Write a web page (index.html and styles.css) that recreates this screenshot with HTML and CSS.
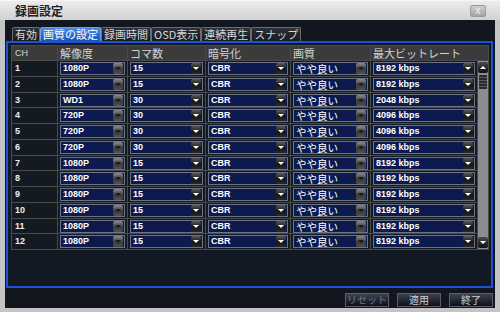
FILE: index.html
```html
<!DOCTYPE html>
<html lang="ja">
<head>
    <meta charset="UTF-8">
    <meta name="viewport" content="width=device-width, initial-scale=1.0">
    <title>録画設定</title>
    <link rel="stylesheet" href="styles.css">
</head>
<body>

<div class="window">
    <div class="titlebar">
        <span class="title">録画設定</span>
        <span class="close">x</span>
    </div>

    <div class="body">
        <div class="tabs">
            <div class="tab">有効</div>
            <div class="tab active">画質の設定</div>
            <div class="tab">録画時間</div>
            <div class="tab">OSD表示</div>
            <div class="tab">連続再生</div>
            <div class="tab">スナップ</div>
        </div>

        <div class="panel">
            <div class="grid">
                <div class="th ch">CH</div>
                <div class="th">解像度</div>
                <div class="th">コマ数</div>
                <div class="th">暗号化</div>
                <div class="th">画質</div>
                <div class="th last">最大ビットレート</div>

                <div class="scrollbar">
                    <div class="sb-btn up"></div>
                    <div class="sb-thumb"></div>
                    <div class="sb-track"></div>
                    <div class="sb-btn down"></div>
                </div>

                <!-- 1 -->
                <div class="td ch">1</div>
                <div class="td"><div class="sel"><span>1080P</span><i class="arrow dim"></i></div></div>
                <div class="td"><div class="sel"><span>15</span><i class="arrow"></i></div></div>
                <div class="td"><div class="sel"><span>CBR</span><i class="arrow"></i></div></div>
                <div class="td"><div class="sel jp"><span>やや良い</span><i class="arrow dim"></i></div></div>
                <div class="td"><div class="sel"><span>8192 kbps</span><i class="arrow"></i></div></div>
                <!-- 2 -->
                <div class="td ch">2</div>
                <div class="td"><div class="sel"><span>1080P</span><i class="arrow dim"></i></div></div>
                <div class="td"><div class="sel"><span>15</span><i class="arrow"></i></div></div>
                <div class="td"><div class="sel"><span>CBR</span><i class="arrow"></i></div></div>
                <div class="td"><div class="sel jp"><span>やや良い</span><i class="arrow dim"></i></div></div>
                <div class="td"><div class="sel"><span>8192 kbps</span><i class="arrow"></i></div></div>
                <!-- 3 -->
                <div class="td ch">3</div>
                <div class="td"><div class="sel"><span>WD1</span><i class="arrow dim"></i></div></div>
                <div class="td"><div class="sel"><span>30</span><i class="arrow"></i></div></div>
                <div class="td"><div class="sel"><span>CBR</span><i class="arrow"></i></div></div>
                <div class="td"><div class="sel jp"><span>やや良い</span><i class="arrow dim"></i></div></div>
                <div class="td"><div class="sel"><span>2048 kbps</span><i class="arrow"></i></div></div>
                <!-- 4 -->
                <div class="td ch">4</div>
                <div class="td"><div class="sel"><span>720P</span><i class="arrow dim"></i></div></div>
                <div class="td"><div class="sel"><span>30</span><i class="arrow"></i></div></div>
                <div class="td"><div class="sel"><span>CBR</span><i class="arrow"></i></div></div>
                <div class="td"><div class="sel jp"><span>やや良い</span><i class="arrow dim"></i></div></div>
                <div class="td"><div class="sel"><span>4096 kbps</span><i class="arrow"></i></div></div>
                <!-- 5 -->
                <div class="td ch">5</div>
                <div class="td"><div class="sel"><span>720P</span><i class="arrow dim"></i></div></div>
                <div class="td"><div class="sel"><span>30</span><i class="arrow"></i></div></div>
                <div class="td"><div class="sel"><span>CBR</span><i class="arrow"></i></div></div>
                <div class="td"><div class="sel jp"><span>やや良い</span><i class="arrow dim"></i></div></div>
                <div class="td"><div class="sel"><span>4096 kbps</span><i class="arrow"></i></div></div>
                <!-- 6 -->
                <div class="td ch">6</div>
                <div class="td"><div class="sel"><span>720P</span><i class="arrow dim"></i></div></div>
                <div class="td"><div class="sel"><span>30</span><i class="arrow"></i></div></div>
                <div class="td"><div class="sel"><span>CBR</span><i class="arrow"></i></div></div>
                <div class="td"><div class="sel jp"><span>やや良い</span><i class="arrow dim"></i></div></div>
                <div class="td"><div class="sel"><span>4096 kbps</span><i class="arrow"></i></div></div>
                <!-- 7 -->
                <div class="td ch">7</div>
                <div class="td"><div class="sel"><span>1080P</span><i class="arrow dim"></i></div></div>
                <div class="td"><div class="sel"><span>15</span><i class="arrow"></i></div></div>
                <div class="td"><div class="sel"><span>CBR</span><i class="arrow"></i></div></div>
                <div class="td"><div class="sel jp"><span>やや良い</span><i class="arrow dim"></i></div></div>
                <div class="td"><div class="sel"><span>8192 kbps</span><i class="arrow"></i></div></div>
                <!-- 8 -->
                <div class="td ch">8</div>
                <div class="td"><div class="sel"><span>1080P</span><i class="arrow dim"></i></div></div>
                <div class="td"><div class="sel"><span>15</span><i class="arrow"></i></div></div>
                <div class="td"><div class="sel"><span>CBR</span><i class="arrow"></i></div></div>
                <div class="td"><div class="sel jp"><span>やや良い</span><i class="arrow dim"></i></div></div>
                <div class="td"><div class="sel"><span>8192 kbps</span><i class="arrow"></i></div></div>
                <!-- 9 -->
                <div class="td ch">9</div>
                <div class="td"><div class="sel"><span>1080P</span><i class="arrow dim"></i></div></div>
                <div class="td"><div class="sel"><span>15</span><i class="arrow"></i></div></div>
                <div class="td"><div class="sel"><span>CBR</span><i class="arrow"></i></div></div>
                <div class="td"><div class="sel jp"><span>やや良い</span><i class="arrow dim"></i></div></div>
                <div class="td"><div class="sel"><span>8192 kbps</span><i class="arrow"></i></div></div>
                <!-- 10 -->
                <div class="td ch">10</div>
                <div class="td"><div class="sel"><span>1080P</span><i class="arrow dim"></i></div></div>
                <div class="td"><div class="sel"><span>15</span><i class="arrow"></i></div></div>
                <div class="td"><div class="sel"><span>CBR</span><i class="arrow"></i></div></div>
                <div class="td"><div class="sel jp"><span>やや良い</span><i class="arrow dim"></i></div></div>
                <div class="td"><div class="sel"><span>8192 kbps</span><i class="arrow"></i></div></div>
                <!-- 11 -->
                <div class="td ch">11</div>
                <div class="td"><div class="sel"><span>1080P</span><i class="arrow dim"></i></div></div>
                <div class="td"><div class="sel"><span>15</span><i class="arrow"></i></div></div>
                <div class="td"><div class="sel"><span>CBR</span><i class="arrow"></i></div></div>
                <div class="td"><div class="sel jp"><span>やや良い</span><i class="arrow dim"></i></div></div>
                <div class="td"><div class="sel"><span>8192 kbps</span><i class="arrow"></i></div></div>
                <!-- 12 -->
                <div class="td ch">12</div>
                <div class="td"><div class="sel"><span>1080P</span><i class="arrow dim"></i></div></div>
                <div class="td"><div class="sel"><span>15</span><i class="arrow"></i></div></div>
                <div class="td"><div class="sel"><span>CBR</span><i class="arrow"></i></div></div>
                <div class="td"><div class="sel jp"><span>やや良い</span><i class="arrow dim"></i></div></div>
                <div class="td"><div class="sel"><span>8192 kbps</span><i class="arrow"></i></div></div>
            </div>
        </div>

        <div class="buttons">
            <div class="btn disabled">リセット</div>
            <div class="btn">適用</div>
            <div class="btn">終了</div>
        </div>
    </div>
</div>

</body>
</html>
```

FILE: styles.css
```css
body {
    margin: 0;
    background-color: #c4c4c4;
    font-family: "Liberation Sans", "Noto Sans CJK JP", sans-serif;
}

.window {
    width: 500px;
    height: 312px;
    overflow: hidden;
}

/* title bar */
.titlebar {
    height: 20px;
    display: flex;
    align-items: center;
    justify-content: space-between;
    padding: 0 14px 0 15px;
    box-sizing: border-box;
    background: linear-gradient(#ececec, #d2d2d2);
    border-top: 1px solid #f6f6f6;
}

.title {
    font-family: "Noto Sans CJK JP", sans-serif;
    font-size: 12px;
    color: #222;
    font-weight: bold;
}

.close {
    width: 16px;
    height: 12px;
    border: 1px solid #9a9a9a;
    border-radius: 2px;
    background: linear-gradient(#cfcfcf, #a4a4a4);
    color: #f4f4f4;
    font-size: 10px;
    line-height: 10px;
    text-align: center;
    box-sizing: border-box;
}

/* dark body */
.body {
    margin: 0 5px;
    height: 288px;
    background-color: #12171f;
    padding: 7px 2px 0 1px;
    box-sizing: border-box;
}

.tabs {
    display: flex;
    padding-left: 6px;
    height: 14px;
}

.tab {
    font-family: "Noto Sans CJK JP", sans-serif;
    font-size: 11px;
    line-height: 12px;
    color: #d8d8d8;
    padding: 0 2px;
    border: 1px solid #6c6c6c;
    border-bottom: none;
    border-radius: 2px 2px 0 0;
    background: linear-gradient(#2c3038, #151920);
}

.tab.active {
    color: #fff;
    background: linear-gradient(#4a8ae8, #1a52c0);
    border-color: #6aa0f0;
}

/* blue framed panel */
.panel {
    height: 247px;
    border: 2px solid #1f52d0;
    padding: 2px 2px 0 3px;
    box-sizing: border-box;
    background-color: #131922;
}

.grid {
    display: grid;
    grid-template-columns: 45px 69px 77px 84px 79px 106px 10px;
    grid-template-rows: 14px repeat(12, 14.75px);
    gap: 1px;
    padding: 1px;
    width: max-content;
    background-color: #4a4a4a;
}

.th {
    background-color: #3b3b3b;
    color: #d4d4d4;
    font-family: "Noto Sans CJK JP", sans-serif;
    font-size: 11px;
    line-height: 14px;
    padding-left: 2px;
}

.th.ch {
    font-family: "Liberation Sans", sans-serif;
    font-size: 9px;
    padding-left: 3px;
}

.th.last {
    grid-column: span 2;
}

.td {
    background-color: #141a22;
    padding: 1px 2px 0 2px;
}

.td.ch {
    color: #f0f0f0;
    font-size: 9px;
    font-weight: bold;
    line-height: 13px;
    padding-left: 3px;
}

/* dropdown */
.sel {
    height: 13px;
    display: flex;
    align-items: center;
    justify-content: space-between;
    background-color: #0c1a4e;
    border: 1px solid #6b7486;
    box-sizing: border-box;
    padding: 0 1px 0 2px;
    color: #fff;
    font-size: 9px;
    font-weight: bold;
    line-height: 11px;
}

.sel.jp {
    font-family: "Noto Sans CJK JP", sans-serif;
    font-size: 10.5px;
    font-weight: normal;
}

.arrow {
    width: 10px;
    height: 11px;
    border-radius: 2px;
    background: linear-gradient(#5a5a5a, #141414 55%, #2a2a2a);
    display: flex;
    align-items: center;
    justify-content: center;
}

.arrow::after {
    content: "";
    border-left: 3px solid transparent;
    border-right: 3px solid transparent;
    border-top: 3px solid #fff;
}

.arrow.dim {
    background: linear-gradient(#8a8a8a, #3a3a3a 55%, #505050);
}

.arrow.dim::after {
    border-top-color: #1a1a1a;
}

/* scrollbar */
.scrollbar {
    grid-column: 7;
    grid-row: 2 / span 12;
    background-color: #8c8c8c;
    display: flex;
    flex-direction: column;
}

.sb-btn {
    height: 11px;
    margin: 1px 0;
    border-radius: 2px;
    background: linear-gradient(#4a4a4a, #101010);
    display: flex;
    align-items: center;
    justify-content: center;
}

.sb-btn.up::after {
    content: "";
    border-left: 3px solid transparent;
    border-right: 3px solid transparent;
    border-bottom: 3px solid #fff;
}

.sb-btn.down::after {
    content: "";
    border-left: 3px solid transparent;
    border-right: 3px solid transparent;
    border-top: 3px solid #fff;
}

.sb-thumb {
    height: 14px;
    margin: 1px 1px 0 1px;
    background: repeating-linear-gradient(#2a2a2a 0 2px, #5a5a5a 2px 3px);
    border-radius: 1px;
}

.sb-track {
    flex: 1;
}

/* bottom buttons */
.buttons {
    display: flex;
    justify-content: flex-end;
    gap: 8px;
    margin-top: 5px;
}

.btn {
    height: 14px;
    width: 44px;
    box-sizing: border-box;
    border: 1px solid #5a5e66;
    background: linear-gradient(#3c4250, #0c1018);
    color: #d0d0d0;
    font-family: "Noto Sans CJK JP", sans-serif;
    font-size: 10px;
    line-height: 12px;
    text-align: center;
    overflow: hidden;
}

.btn.disabled {
    color: #707686;
}
```
